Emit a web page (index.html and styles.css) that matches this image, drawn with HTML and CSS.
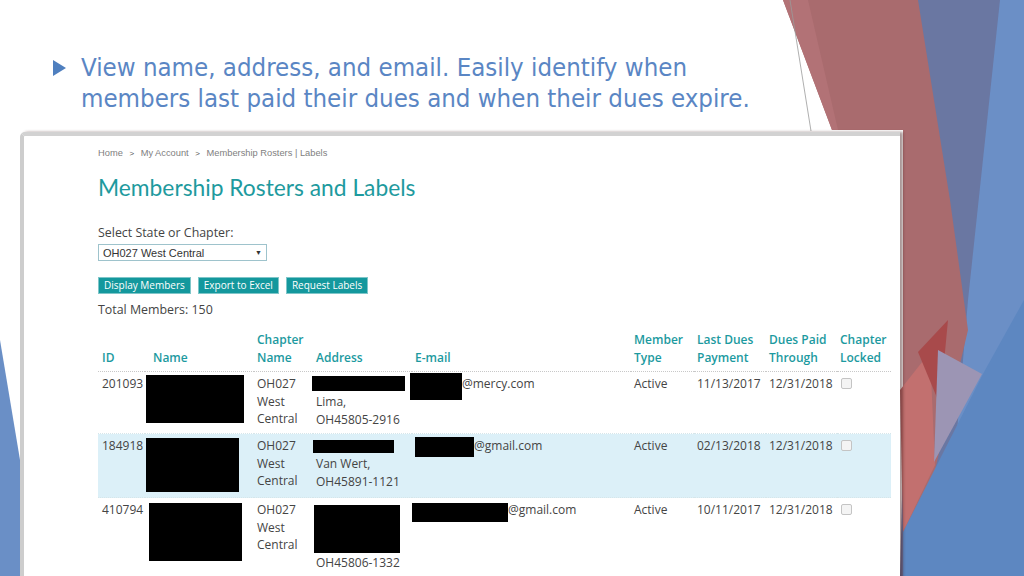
FILE: index.html
```html
<!DOCTYPE html>
<html>
<head>
<meta charset="utf-8">
<link rel="stylesheet" href="styles.css">
</head>
<body>
<div class="slide">
  <svg class="slide-bg" width="1024" height="576" viewBox="0 0 1024 576">
    <polygon points="915,0 1024,0 1024,576 900,576" fill="#6a77a2"/>
    <polygon points="1000,0 1024,0 1024,576 945,576 968,300" fill="#6b8fc6"/>
    <polygon points="783,0 918,0 950,200 968,330 935,470 903,545 903,130 832,130" fill="#a96b6e"/>
    <polygon points="783,0 808,0 838,130 832,130" fill="#b27276"/>
    <polygon points="900,390 930,352 935,465 903,532" fill="#c2706f"/>
    <polygon points="918,352 948,320 940,405" fill="#a84a4b"/>
    <polygon points="938,350 982,374 934,462" fill="#9c95b4"/>
    <polygon points="903,532 984,372 1024,300 1024,576 903,576" fill="#5d87c1"/>
    <polygon points="0,340 25,490 25,576 0,576" fill="#6a8fc6"/>
    <line x1="790" y1="0" x2="811" y2="131" stroke="#9a9a9a" stroke-width="0.8"/>
  </svg>

  <div class="slide-title">
    <svg class="bullet" width="13" height="16" viewBox="0 0 13 16"><polygon points="0,0 13,8 0,16" fill="#4f7fbf"/></svg>
    <p class="title-text">View name, address, and email. Easily identify when<br>members last paid their dues and when their dues expire.</p>
  </div>

  <div class="shot">
    <div class="page">
      <div class="crumbs">Home <span class="sep">&gt;</span> My Account <span class="sep">&gt;</span> Membership Rosters | Labels</div>
      <h1 class="page-title">Membership Rosters and Labels</h1>
      <div class="label">Select State or Chapter:</div>
      <div class="select"><span>OH027 West Central</span><span class="arrow">▼</span></div>
      <div class="buttons">
        <span class="btn">Display Members</span>
        <span class="btn">Export to Excel</span>
        <span class="btn">Request Labels</span>
      </div>
      <div class="total">Total Members: 150</div>

      <table class="roster">
        <colgroup>
          <col class="c-id"><col class="c-name"><col class="c-chap"><col class="c-addr"><col class="c-mail"><col class="c-type"><col class="c-last"><col class="c-paid"><col class="c-lock">
        </colgroup>
        <thead>
          <tr>
            <th>ID</th><th class="th-name">Name</th><th>Chapter<br>Name</th><th>Address</th><th>E-mail</th><th>Member<br>Type</th><th>Last Dues<br>Payment</th><th>Dues Paid<br>Through</th><th>Chapter<br>Locked</th>
          </tr>
        </thead>
        <tbody>
          <tr class="row1">
            <td>201093</td>
            <td class="td-name"><div class="redact n1"></div></td>
            <td>OH027<br>West<br>Central</td>
            <td><div class="redact a1"></div>Lima,<br>OH45805-2916</td>
            <td><div class="mail"><div class="redact e1"></div><span>@mercy.com</span></div></td>
            <td>Active</td><td>11/13/2017</td><td>12/31/2018</td><td><span class="chk"></span></td>
          </tr>
          <tr class="row2 alt">
            <td>184918</td>
            <td class="td-name"><div class="redact n2"></div></td>
            <td>OH027<br>West<br>Central</td>
            <td><div class="redact a2"></div>Van Wert,<br>OH45891-1121</td>
            <td><div class="mail"><div class="redact e2"></div><span>@gmail.com</span></div></td>
            <td>Active</td><td>02/13/2018</td><td>12/31/2018</td><td><span class="chk"></span></td>
          </tr>
          <tr class="row3">
            <td>410794</td>
            <td class="td-name"><div class="redact n3"></div></td>
            <td>OH027<br>West<br>Central</td>
            <td><div class="redact a3"></div>OH45806-1332</td>
            <td><div class="mail"><div class="redact e3"></div><span>@gmail.com</span></div></td>
            <td>Active</td><td>10/11/2017</td><td>12/31/2018</td><td><span class="chk"></span></td>
          </tr>
          <tr class="alt row4">
            <td></td><td></td><td></td><td></td><td></td><td></td><td></td><td></td><td></td>
          </tr>
        </tbody>
      </table>
    </div>
  </div>
</div>
</body>
</html>
```

FILE: styles.css
```css
html, body {
  margin: 0;
  padding: 0;
  background: #ffffff;
}
.slide {
  position: relative;
  width: 1024px;
  height: 576px;
  overflow: hidden;
  background: #ffffff;
}
.slide-bg {
  position: absolute;
  left: 0;
  top: 0;
  z-index: 0;
}
.slide-title {
  position: relative;
  z-index: 1;
  display: flex;
  align-items: flex-start;
  padding: 52px 0 0 53px;
  height: 80px;
}
.bullet {
  margin-top: 8px;
  margin-right: 15px;
  flex: none;
}
.title-text {
  margin: 0;
  font-family: "DejaVu Sans Condensed", "DejaVu Sans", sans-serif;
  font-size: 25.6px;
  line-height: 31px;
  color: #5a86c4;
}
.shot {
  position: relative;
  z-index: 1;
  margin-left: 20px;
  width: 876px;
  height: 444px;
  border-top: 4px solid #d2d2d2;
  border-left: 4px solid #cdcdcd;
  border-top-left-radius: 5px;
  background: #ffffff;
  box-shadow: 3px 0 3px rgba(60, 20, 20, 0.45);
}
.page {
  padding: 11px 0 0 74px;
  font-family: "Open Sans", "DejaVu Sans", sans-serif;
  color: #444444;
}
.crumbs {
  font-family: "Liberation Sans", Arial, sans-serif;
  font-size: 9.3px;
  line-height: 12px;
  color: #808080;
}
.crumbs .sep {
  margin: 0 4px;
  color: #555;
  font-size: 8px;
}
.page-title {
  margin: 13px 0 0 0;
  font-family: "Lato", "Open Sans", sans-serif;
  font-weight: 400;
  font-size: 22.8px;
  line-height: 28px;
  color: #1e9a9e;
}
.label {
  margin-top: 24px;
  font-size: 12.4px;
  line-height: 16px;
  color: #444;
}
.select {
  margin-top: 3px;
  width: 163px;
  height: 15px;
  border: 1px solid #9ec3cc;
  display: flex;
  justify-content: space-between;
  align-items: center;
  padding: 0 0 0 4px;
  font-family: "Liberation Sans", Arial, sans-serif;
  font-size: 11px;
  color: #333;
}
.select .arrow {
  font-size: 7px;
  margin-right: 4px;
}
.buttons {
  display: flex;
  gap: 7px;
  margin-top: 16px;
}
.btn {
  background: #14989d;
  color: #ffffff;
  font-size: 10px;
  line-height: 15px;
  padding: 0 5px;
  border: 1px solid #7fc6c9;
}
.total {
  margin-top: 7px;
  font-size: 12.4px;
  line-height: 18px;
  color: #444;
}
.roster {
  margin-top: 12px;
  width: 793px;
  table-layout: fixed;
  border-collapse: collapse;
  font-size: 12px;
  color: #444;
}
.c-id { width: 47px; }
.c-name { width: 109px; }
.c-chap { width: 59px; }
.c-addr { width: 99px; }
.c-mail { width: 219px; }
.c-type { width: 63px; }
.c-last { width: 72px; }
.c-paid { width: 71px; }
.c-lock { width: 54px; }
.roster th {
  text-align: left;
  vertical-align: bottom;
  font-weight: 600;
  color: #1c9aa0;
  line-height: 17.5px;
  padding: 0 0 5px 3px;
  border-bottom: 1px dotted #c8c8c8;
  white-space: nowrap;
}
.roster th:first-child { padding-left: 4px; }
.roster .th-name { padding-left: 8px; }
.roster td {
  vertical-align: top;
  line-height: 17.5px;
  padding: 3px 0 5px 3px;
  white-space: nowrap;
  border-bottom: 1px dotted #d6e6ea;
}
.roster td:first-child { padding-left: 4px; }
.roster .td-name { padding-left: 0; }
.row1 td { height: 53px; }
.row2 td { height: 51px; }
.row3 td { height: 69px; }
.row4 td { height: 10px; padding: 0; border: none; }
.alt td { background: #dcf0f8; }
.redact { background: #000; }
.n1 { width: 98px; height: 48px; margin-left: 1px; }
.n2 { width: 93px; height: 54px; margin-left: 1px; margin-top: 1px; }
.n3 { width: 93px; height: 58px; margin-left: 4px; margin-top: 2px; }
.a1 { width: 93px; height: 15px; margin-left: -4px; margin-top: 1px; margin-bottom: 2px; }
.a2 { width: 81px; height: 13px; margin-left: -3px; margin-top: 3px; margin-bottom: 2px; }
.a3 { width: 86px; height: 48px; margin-left: -2px; margin-top: 4px; margin-bottom: 1px; }
.mail { display: flex; align-items: flex-start; }
.e1 { width: 52px; height: 27px; margin-left: -5px; margin-top: -2px; }
.e2 { width: 59px; height: 20px; margin-left: 0; margin-top: 0; }
.e3 { width: 96px; height: 19px; margin-left: -3px; margin-top: 2px; }
.chk {
  display: inline-block;
  width: 9px;
  height: 9px;
  border: 1px solid #c4c4c4;
  border-radius: 2px;
  background: #f4f4f4;
  margin: 3px 0 0 1px;
}
```
